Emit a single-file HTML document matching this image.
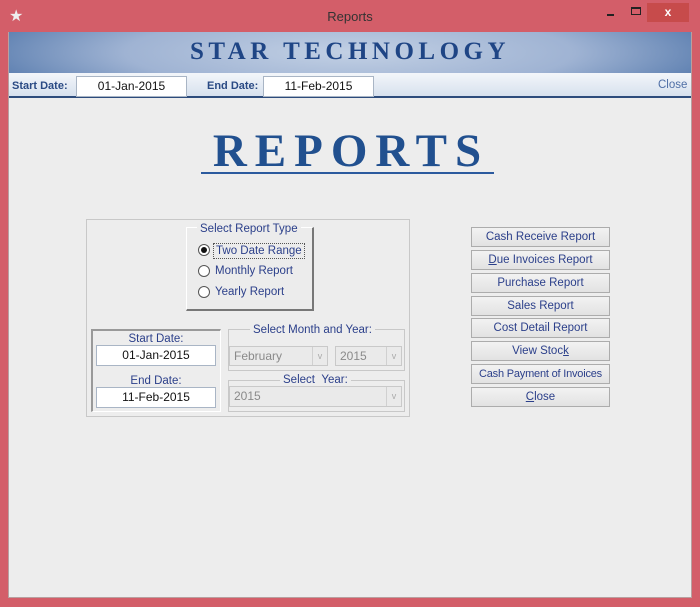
<!DOCTYPE html>
<html><head><style>
*{box-sizing:border-box;margin:0;padding:0}
body{width:700px;height:607px;background:#d35e69;position:relative;overflow:hidden;font-family:"Liberation Sans",sans-serif;font-size:11.5px;color:#2b3f8a}
.a{position:absolute;white-space:nowrap}
.client{left:8px;top:32px;width:684px;height:566px;background:#ededed;border:1px solid #b8a0a0}
.banner{left:9px;top:32px;width:682px;height:41px;background:radial-gradient(ellipse 60% 160% at 50% 50%,#c2d0e4 0%,#9fb3d3 55%,#4d73a8 100%)}
.tool{left:9px;top:73px;width:682px;height:25px;background:linear-gradient(#f3f6fa,#d7e1ee);border-bottom:2px solid #2d4c7c}
.tb{background:#fff;border:1px solid #a9b5c5;color:#111;text-align:center;font-size:12px;line-height:19px}
.lbl{font-weight:bold;color:#2a4a84;font-size:11px}
.btn{left:471px;width:139px;height:20px;background:linear-gradient(#f2f2f2,#e2e2e2);border:1px solid #acacac;text-align:center;line-height:18px;color:#2b3f8a;font-size:11.5px}
.radio{width:12px;height:12px;border-radius:50%;border:1px solid #555;background:#fff}
.grp{border:1px solid #c8c8c8}
.cb{border:1px solid #c9c9c9;background:#eaeaea;color:#8a8a8a;font-size:12px;line-height:18px;padding-left:4px}
.cb span{position:absolute;right:0;top:0;width:15px;height:100%;border-left:1px solid #d0d0d0;color:#aaa;font-size:9px;text-align:center}
</style></head><body>
<div class="a" style="left:9px;top:6px;color:#eee;font-size:16px">★</div>
<div class="a" style="left:0;width:700px;top:9px;text-align:center;color:#333;font-size:13px">Reports</div>
<div class="a" style="left:607px;top:14px;width:7px;height:2px;background:#222"></div>
<div class="a" style="left:631px;top:7px;width:10px;height:8px;border:1px solid #222;border-top-width:2px"></div>
<div class="a" style="left:647px;top:3px;width:42px;height:19px;background:#c74b4b;color:#fff;text-align:center;font-size:12px;line-height:18px;font-weight:bold">x</div>
<div class="a client"></div>
<div class="a banner"></div>
<div class="a" style="left:9px;width:682px;top:37px;text-align:center;font-family:'Liberation Serif',serif;font-weight:bold;font-size:25px;letter-spacing:4.5px;color:#1f4585;line-height:30px">STAR TECHNOLOGY</div>
<div class="a tool"></div>
<div class="a lbl" style="left:12px;top:80px">Start Date:</div>
<div class="a tb" style="left:76px;top:76px;width:111px;height:21px">01-Jan-2015</div>
<div class="a lbl" style="left:207px;top:80px">End Date:</div>
<div class="a tb" style="left:263px;top:76px;width:111px;height:21px">11-Feb-2015</div>
<div class="a" style="left:658px;top:79px;color:#4f6fa6;font-size:11.5px">Close</div>
<div class="a" style="left:196px;width:310px;top:126px;text-align:center;font-family:'Liberation Serif',serif;font-weight:bold;font-size:47px;letter-spacing:8px;color:#21508f;line-height:50px">REPORTS</div>
<div class="a" style="left:201px;top:172px;width:293px;height:2px;background:#2b5a9e"></div>

<div class="a grp" style="left:86px;top:219px;width:324px;height:198px"></div>
<div class="a" style="left:186px;top:227px;width:128px;height:84px;border:1px solid #fff;border-right:2px solid #777;border-bottom:2px solid #777;background:#ececec"></div>
<div class="a" style="left:197px;top:223px;background:#ececec;padding:0 3px">Select Report Type</div>
<div class="a radio" style="left:198px;top:244px"><div style="width:6px;height:6px;border-radius:50%;background:#111;margin:2px"></div></div>
<div class="a" style="left:213px;top:243px;border:1px dotted #555;padding:0 2px;line-height:14px">Two Date Range</div>
<div class="a radio" style="left:198px;top:265px"></div>
<div class="a" style="left:215px;top:265px">Monthly Report</div>
<div class="a radio" style="left:198px;top:286px"></div>
<div class="a" style="left:215px;top:286px">Yearly Report</div>

<div class="a" style="left:91px;top:329px;width:130px;height:83px;border:1px solid #fff;border-left:2px solid #999;border-top:2px solid #999"></div>
<div class="a" style="left:91px;top:333px;width:130px;text-align:center">Start Date:</div>
<div class="a tb" style="left:96px;top:345px;width:120px;height:21px;font-size:12px">01-Jan-2015</div>
<div class="a" style="left:91px;top:375px;width:130px;text-align:center">End Date:</div>
<div class="a tb" style="left:96px;top:387px;width:120px;height:21px;font-size:12px">11-Feb-2015</div>

<div class="a grp" style="left:228px;top:329px;width:177px;height:42px"></div>
<div class="a" style="left:250px;top:324px;background:#ededed;padding:0 3px">Select Month and Year:</div>
<div class="a cb" style="left:229px;top:346px;width:99px;height:20px">February<span>v</span></div>
<div class="a cb" style="left:335px;top:346px;width:67px;height:20px">2015<span>v</span></div>
<div class="a grp" style="left:228px;top:380px;width:177px;height:32px"></div>
<div class="a" style="left:280px;top:374px;background:#ededed;padding:0 3px">Select &nbsp;Year:</div>
<div class="a cb" style="left:229px;top:386px;width:173px;height:21px">2015<span>v</span></div>

<div class="a btn" style="top:227px">Cash Receive Report</div>
<div class="a btn" style="top:250px"><u>D</u>ue Invoices Report</div>
<div class="a btn" style="top:273px">Purchase Report</div>
<div class="a btn" style="top:296px">Sales Report</div>
<div class="a btn" style="top:318px">Cost Detail Report</div>
<div class="a btn" style="top:341px">View Stoc<u>k</u></div>
<div class="a btn" style="top:364px;font-size:11px;letter-spacing:-0.2px">Cash Payment of Invoices</div>
<div class="a btn" style="top:387px"><u>C</u>lose</div>
</body></html>
